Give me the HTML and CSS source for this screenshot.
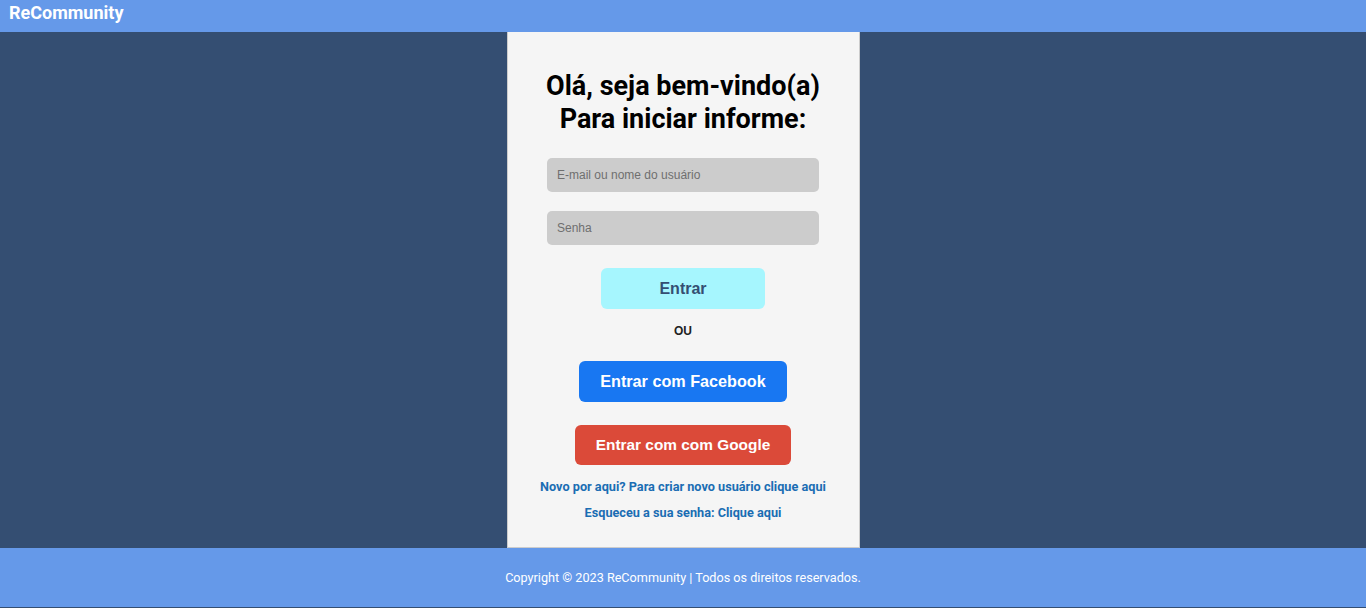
FILE: index.html
```html
<!DOCTYPE html>
<html lang="pt-BR">
<head>
<meta charset="utf-8">
<title>ReCommunity</title>
<link rel="stylesheet" href="styles.css">
</head>
<body>
<header class="topbar">
  <span class="brand">ReCommunity</span>
</header>
<main class="main">
  <section class="card">
    <h1 class="title">Olá, seja bem-vindo(a)<br>Para iniciar informe:</h1>
    <form class="form">
      <input class="field" type="text" placeholder="E-mail ou nome do usuário">
      <input class="field field-second" type="password" placeholder="Senha">
      <button class="btn btn-enter" type="button">Entrar</button>
      <p class="or">OU</p>
      <button class="btn btn-facebook" type="button">Entrar com Facebook</button>
      <button class="btn btn-google" type="button">Entrar com com Google</button>
    </form>
    <a class="link link-first" href="#">Novo por aqui? Para criar novo usuário clique aqui</a>
    <a class="link link-second" href="#">Esqueceu a sua senha: Clique aqui</a>
  </section>
</main>
<footer class="footer">
  <p class="copy">Copyright © 2023 ReCommunity | Todos os direitos reservados.</p>
</footer>
</body>
</html>
```
FILE: styles.css
```css
html {
  background: #344e72;
}
body {
  margin: 0;
  font-family: Roboto, "Liberation Sans", Arial, sans-serif;
}
.topbar {
  height: 32px;
  background: #6599e9;
  display: flex;
  align-items: center;
  padding-left: 9px;
  box-sizing: border-box;
}
.brand {
  color: #ffffff;
  font-weight: 700;
  font-size: 18px;
  margin-top: -8px;
}
.main {
  height: 516px;
  background: #344e72;
  display: flex;
  justify-content: center;
}
.card {
  width: 353px;
  box-sizing: border-box;
  background: #f5f5f5;
  border: 1px solid #cccccc;
  border-top: none;
  display: flex;
  flex-direction: column;
  align-items: center;
  padding-top: 38px;
}
.title {
  margin: 0;
  font-size: 27px;
  line-height: 33px;
  font-weight: 700;
  color: #000;
  text-align: center;
}
.form {
  display: flex;
  flex-direction: column;
  align-items: center;
  margin-top: 22px;
}
.field {
  width: 272px;
  height: 34px;
  box-sizing: border-box;
  border: none;
  border-radius: 5px;
  background: #cccccc;
  padding: 0 10px;
  font-family: "Liberation Sans", Arial, sans-serif;
  font-size: 12px;
  color: #333;
}
.field::placeholder {
  color: #6f6f6f;
}
.field-second {
  margin-top: 19px;
}
.btn {
  border: none;
  border-radius: 6px;
  font-family: "Liberation Sans", Arial, sans-serif;
  font-weight: 700;
  cursor: pointer;
}
.btn-enter {
  margin-top: 23px;
  width: 164px;
  height: 41px;
  background: #a6f6fe;
  color: #344e72;
  font-size: 16px;
}
.or {
  margin: 15px 0 0;
  font-family: "Liberation Sans", Arial, sans-serif;
  font-weight: 700;
  font-size: 12px;
  line-height: 14px;
  color: #222;
}
.btn-facebook {
  margin-top: 23px;
  width: 208px;
  height: 41px;
  background: #1877f2;
  color: #fff;
  font-size: 16.2px;
}
.btn-google {
  margin-top: 23px;
  width: 216px;
  height: 40px;
  background: #db4a39;
  color: #fff;
  font-size: 15.4px;
}
.link {
  color: #1a6db3;
  font-weight: 700;
  font-size: 12.7px;
  line-height: 14px;
  text-decoration: none;
}
.link-first {
  margin-top: 15px;
}
.link-second {
  margin-top: 12px;
}
.footer {
  height: 59px;
  background: #6599e9;
  display: flex;
  align-items: center;
  justify-content: center;
}
.copy {
  margin: 0;
  color: #fff;
  font-size: 12.65px;
  line-height: 14px;
}
```
